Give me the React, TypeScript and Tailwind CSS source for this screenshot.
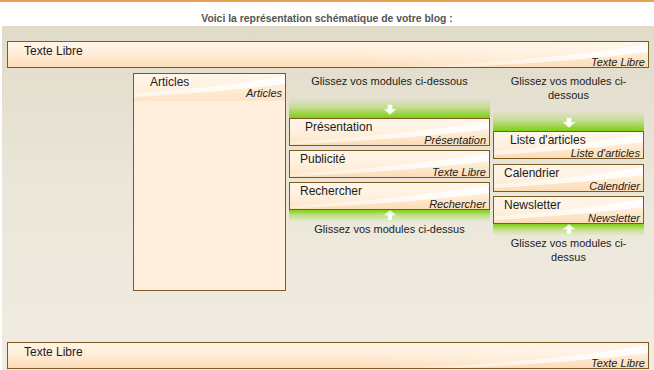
import React from "react";

const FONT = "font-['Liberation_Sans',Arial,sans-serif]";

function Swoosh() {
  return (
    <svg
      className="absolute right-0 top-0 pointer-events-none"
      width="300"
      height="28"
      viewBox="0 0 300 28"
    >
      <defs>
        <linearGradient id="sw" x1="0" y1="0" x2="1" y2="0">
          <stop offset="0" stopColor="#ffffff" stopOpacity="0" />
          <stop offset="0.5" stopColor="#ffffff" stopOpacity="0.6" />
          <stop offset="1" stopColor="#ffffff" stopOpacity="0.95" />
        </linearGradient>
        <linearGradient id="sw2" x1="0" y1="0" x2="1" y2="0">
          <stop offset="0" stopColor="#fff6ea" stopOpacity="0" />
          <stop offset="1" stopColor="#fff6ea" stopOpacity="0.8" />
        </linearGradient>
      </defs>
      <path d="M0,26 C110,24 220,16 300,2 L300,0 L0,0 Z" fill="url(#sw2)" />
      <path d="M0,26 C110,24 220,16 300,2 L300,10 C220,20 110,27 0,28 Z" fill="url(#sw)" />
    </svg>
  );
}

function Module({
  title,
  label,
  padClass,
  heightClass = "h-[28px]",
  titleClass = "pt-[1px]",
}: {
  title: string;
  label: string;
  padClass: string;
  heightClass?: string;
  titleClass?: string;
}) {
  return (
    <div
      className={`relative ${heightClass} border border-[#7d5a1f] overflow-hidden bg-[linear-gradient(to_bottom,#fff5e8_0%,#ffeed9_45%,#fcdcb6_100%)]`}
    >
      <Swoosh />
      <div className={`relative ${padClass} ${titleClass} text-[12px] leading-[14px] text-[#1c1c1c]`}>{title}</div>
      <div className="absolute right-[3px] bottom-0 text-[11px] leading-[10px] italic text-[#1c1c1c]">{label}</div>
    </div>
  );
}

function Arrow({ up = false }: { up?: boolean }) {
  return (
    <svg width="14" height="11" viewBox="0 0 14 11">
      {up ? (
        <path d="M7,0.5 L13.5,5.5 L9.5,5.5 L9.5,10.5 L4.5,10.5 L4.5,5.5 L0.5,5.5 Z" fill="#ffffff" stroke="#c9ee9a" strokeWidth="0.8" />
      ) : (
        <path d="M4.5,0.5 L9.5,0.5 L9.5,5 L13.5,5 L7,10.5 L0.5,5 L4.5,5 Z" fill="#ffffff" stroke="#c9ee9a" strokeWidth="0.8" />
      )}
    </svg>
  );
}

function TopBar({ heightClass }: { heightClass: string }) {
  return (
    <div
      className={`${heightClass} flex items-start justify-center pt-[6px] bg-[linear-gradient(to_bottom,rgba(140,215,40,0)_0%,rgba(140,215,40,0.35)_45%,#7fcf14_100%)]`}
    >
      <Arrow />
    </div>
  );
}

function BottomBar() {
  return (
    <div className="h-[12px] flex items-start justify-center bg-[linear-gradient(to_bottom,#80d016_0%,rgba(140,215,40,0.45)_45%,rgba(140,215,40,0)_100%)]">
      <Arrow up />
    </div>
  );
}

export default function App() {
  return (
    <div className={`w-[654px] h-[370px] bg-white overflow-hidden ${FONT}`}>
      <div className="h-[2px] bg-[#e9a04e]" />
      <div className="h-[24px] pt-[11px] text-center text-[10.4px] leading-[12px] font-bold text-[#555555]">
        Voici la représentation schématique de votre blog :
      </div>
      <div className="ml-[2px] h-[344px] px-[5px] pt-[15px] flex flex-col bg-[linear-gradient(to_bottom,#e0dbc9_0%,#ebe7da_50%,#f0ece2_100%)]">
        <Module title="Texte Libre" label="Texte Libre" padClass="pl-[16px]" titleClass="pt-[2px]" heightClass="h-[27px]" />

        <div className="mt-[5px] h-[269px] flex items-start">
          {/* Articles */}
          <div className="ml-[126px] w-[153px] h-[218px] border border-[#7d5a1f] bg-[#ffefdc] flex flex-col">
            <div className="relative h-[27px] overflow-hidden bg-[linear-gradient(to_bottom,#fff5e8_0%,#ffeed9_45%,#fde4c6_100%)]">
              <Swoosh />
              <div className="relative pl-[16px] pt-[1px] text-[12px] leading-[14px] text-[#1c1c1c]">Articles</div>
              <div className="absolute right-[3px] bottom-[2px] text-[11px] leading-[11px] italic text-[#1c1c1c]">Articles</div>
            </div>
          </div>

          {/* Column 2 */}
          <div className="ml-[3px] w-[201px] flex flex-col">
            <div className="pt-[1px] text-center text-[11px] leading-[14px] text-[#1c1c1c]">Glissez vos modules ci-dessous</div>
            <div className="mt-[10px]">
              <TopBar heightClass="h-[20px]" />
            </div>
            <div className="flex flex-col gap-[4px]">
              <Module title="Présentation" label="Présentation" padClass="pl-[15px]" />
              <Module title="Publicité" label="Texte Libre" padClass="pl-[10px]" />
              <Module title="Rechercher" label="Rechercher" padClass="pl-[10px]" />
            </div>
            <BottomBar />
            <div className="text-center text-[11px] leading-[14px] text-[#1c1c1c]">Glissez vos modules ci-dessus</div>
          </div>

          {/* Column 3 */}
          <div className="ml-[3px] w-[151px] flex flex-col">
            <div className="pt-[1px] px-[12px] text-center text-[11px] leading-[14px] text-[#1c1c1c]">Glissez vos modules ci-dessous</div>
            <div className="mt-[9px]">
              <TopBar heightClass="h-[20px]" />
            </div>
            <div className="flex flex-col">
              <Module title="Liste d'articles" label="Liste d'articles" padClass="pl-[16px]" />
              <div className="mt-[5px]">
                <Module title="Calendrier" label="Calendrier" padClass="pl-[10px]" />
              </div>
              <div className="mt-[4px]">
                <Module title="Newsletter" label="Newsletter" padClass="pl-[10px]" />
              </div>
            </div>
            <BottomBar />
            <div className="px-[12px] text-center text-[11px] leading-[14px] text-[#1c1c1c]">Glissez vos modules ci-dessus</div>
          </div>
        </div>

        <Module title="Texte Libre" label="Texte Libre" padClass="pl-[16px]" titleClass="pt-[2px]" heightClass="h-[27px]" />
      </div>
    </div>
  );
}
